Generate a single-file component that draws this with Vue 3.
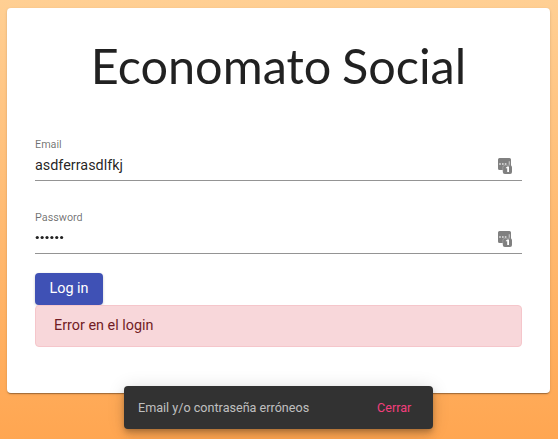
<script setup>
import { ref } from 'vue'

const email = ref('asdferrasdlfkj')
const password = ref('secret')
const fields = [
  { id: 'email', label: 'Email', type: 'text', model: email },
  { id: 'password', label: 'Password', type: 'password', model: password },
]
</script>

<template>
  <main class="page">
    <section class="card">
      <h1 class="title">Economato Social</h1>
      <form class="form" @submit.prevent>
        <div v-for="f in fields" :key="f.id" class="field">
          <label class="label" :for="f.id">{{ f.label }}</label>
          <div class="control">
            <input v-if="f.type === 'text'" :id="f.id" v-model="f.model.value" class="input" type="text" spellcheck="false" />
            <svg v-else class="dots" width="30" height="18" viewBox="0 0 30 18">
              <circle v-for="n in f.model.value.length" :key="n" :cx="-2.6 + n * 4.87" cy="7.500" r="1.600" />
            </svg>
            <svg class="manager" width="16" height="18" viewBox="0 0 16 18">
              <path d="M2.500 1h10Q14 1 14 2.500V9H6v4H2.500Q1 13 1 11.500V2.500Q1 1 2.500 1Z" fill="#808080" />
              <path d="M2.200 6.200h1.600v1.500H2.200zM5 6.200h1.600v1.500H5zM7.800 6.200h1.600v1.500H7.800zM11.800 4.300h.8v3.500h-.8z" fill="#e4e4e4" />
              <rect x="5.800" y="8.300" width="9.200" height="8.700" rx="2" fill="#808080" />
              <path d="M5.800 13.500V10.500Q5.800 8.300 8 8.300H13" fill="none" stroke="#bbb" stroke-width=".5" />
              <path d="M8.800 10.700l1.500-1.200h1.700V15h-1.800v-3.700H8.800z" fill="#fff" />
            </svg>
          </div>
        </div>
        <button class="submit" type="submit">Log in</button>
        <div class="alert" role="alert">Error en el login</div>
      </form>
    </section>
    <aside class="snackbar">
      <span>Email y/o contraseña erróneos</span>
      <button class="dismiss" type="button">Cerrar</button>
    </aside>
  </main>
</template>

<style>
body {
  margin: 0;
  overflow: hidden;
}
</style>

<style scoped>
.page {
  position: relative;
  box-sizing: border-box;
  height: 439px;
  padding: 8px 8px 0 7px;
  background: linear-gradient(#ffcf93, #ffa651);
  color: rgba(0, 0, 0, 0.87);
  font-family: Roboto, sans-serif;
}

.card {
  box-sizing: border-box;
  height: 385px;
  padding: 28px;
  border-radius: 4px;
  background: #fff;
  box-shadow: 0 2px 1px -1px rgba(0, 0, 0, 0.2), 0 1px 1px rgba(0, 0, 0, 0.14), 0 1px 3px rgba(0, 0, 0, 0.12);
}

.title {
  margin: 0;
  height: 94px;
  font: 400 48.6px/58px Lato, sans-serif;
  word-spacing: -1.8px;
  text-align: center;
  white-space: nowrap;
}

.form {
  display: flex;
  flex-direction: column;
  align-items: stretch;
}

.field {
  box-sizing: border-box;
  height: 51px;
  margin-bottom: 22px;
  border-bottom: 1px solid #949494;
}

.label {
  display: block;
  padding-top: 8px;
  font-size: 10.8px;
  line-height: 13px;
  color: rgba(0, 0, 0, 0.57);
}

.control {
  display: flex;
  align-items: center;
  justify-content: space-between;
  height: 24px;
  padding: 3px 9px 0 0;
}

.input {
  flex: 1;
  min-width: 0;
  height: 18px;
  padding: 0;
  border: 0;
  outline: 0;
  background: transparent;
  color: inherit;
  font: 400 14.4px/18px Roboto, sans-serif;
}

.dots {
  fill: #212121;
}

.submit {
  align-self: flex-start;
  width: 68px;
  height: 32px;
  margin-top: -3px;
  padding: 0;
  border: 0;
  border-radius: 4px;
  background: #3f51b5;
  box-shadow: 0 1px 3px rgba(0, 0, 0, 0.2);
  color: #fff;
  font: 400 14.4px/30px Roboto, sans-serif;
}

.alert {
  box-sizing: border-box;
  height: 42px;
  padding: 0 18px;
  border: 1px solid #f5c6cb;
  border-radius: 4px;
  background: #f8d7da;
  color: #721c24;
  font-size: 14.4px;
  line-height: 40px;
}

.snackbar {
  position: absolute;
  left: 124px;
  top: 386px;
  box-sizing: border-box;
  display: flex;
  align-items: center;
  justify-content: space-between;
  width: 309px;
  height: 43px;
  padding: 0 21.600px 0 14px;
  border-radius: 4px;
  background: #323232;
  box-shadow: 0 3px 5px -1px rgba(0, 0, 0, 0.2), 0 6px 10px rgba(0, 0, 0, 0.14), 0 1px 18px rgba(0, 0, 0, 0.12);
  color: rgba(255, 255, 255, 0.7);
  font-size: 12.6px;
}

.dismiss {
  padding: 0;
  border: 0;
  background: none;
  color: #f23e7c;
  font: 400 12.6px/18px Roboto, sans-serif;
}
</style>
